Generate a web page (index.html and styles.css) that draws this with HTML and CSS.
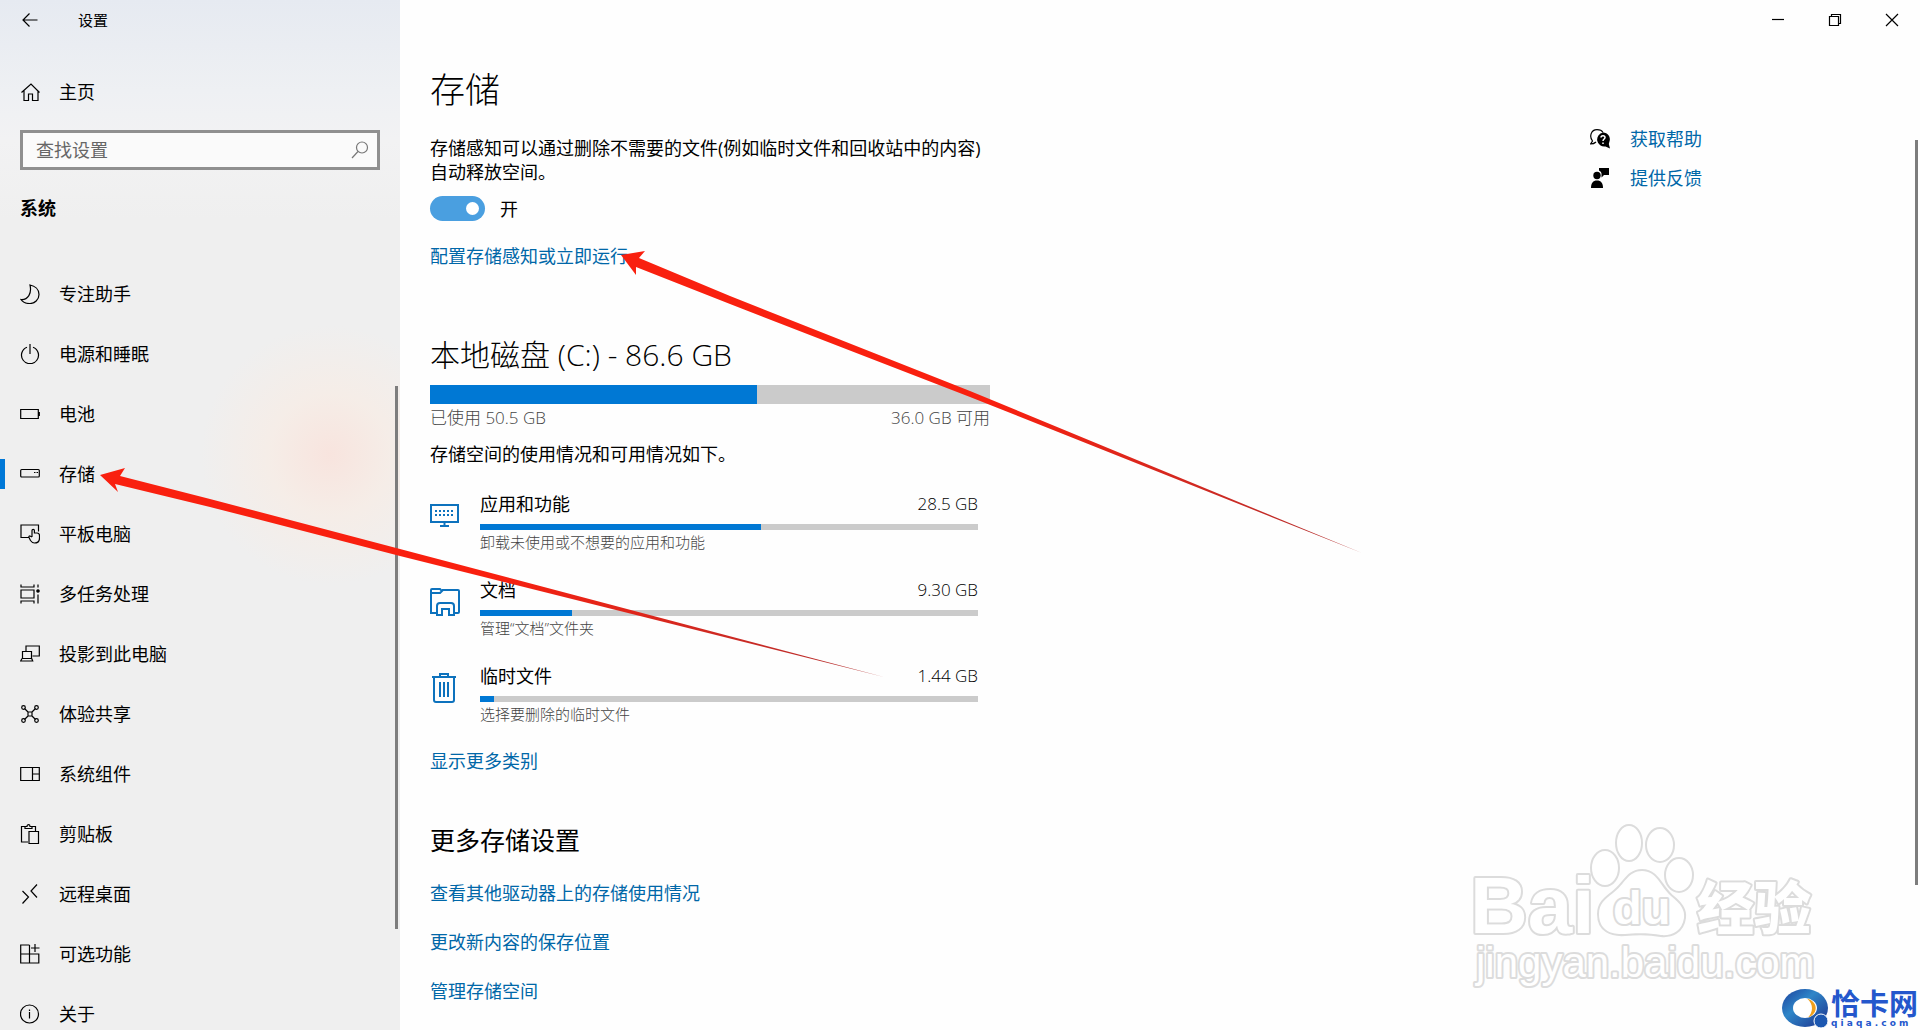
FILE: index.html
```
<!DOCTYPE html>
<html lang="zh-CN">
<head>
  <meta charset="UTF-8">
  <meta name="viewport" content="width=device-width, initial-scale=1.0">
  <title>设置</title>
  <link rel="stylesheet" href="styles.css">
</head>
<body>
  <aside class="sidebar">
    <header class="sidebar-top">
      <button class="back-btn" aria-label="返回">
        <svg class="icon" viewBox="0 0 20 20"><path d="M17.500 10H3M9.500 3.500 3 10l6.500 6.500"/></svg>
      </button>
      <span class="app-name">设置</span>
    </header>

    <a class="nav-item home" href="#">
      <svg class="icon" viewBox="0 0 20 20"><path d="M1.500 10.500 11 2l8.500 8.500M4 8.500v10h4.500v-6.500h4v6.500H18v-10"/></svg>
      主页
    </a>

    <div class="search">
      <input type="search" placeholder="查找设置" aria-label="查找设置">
      <svg class="icon search-icon" viewBox="0 0 20 20"><circle cx="12" cy="7.500" r="5.500"/><path d="M8 11.500 2 18"/></svg>
    </div>

    <h2 class="group-title">系统</h2>

    <nav class="nav">
      <a class="nav-item" href="#">
        <svg class="icon" viewBox="0 0 20 20"><path d="M10 1c5 1 9 4.500 9 9.500A9 9 0 0 1 9.500 19.500C6 19.500 2.500 18 1 15.500c7 .500 11-6 9-14.500z"/></svg>
        专注助手
      </a>
      <a class="nav-item" href="#">
        <svg class="icon" viewBox="0 0 20 20"><path d="M7 3.200a8.500 8.500 0 1 0 6 0M10 0v10"/></svg>
        电源和睡眠
      </a>
      <a class="nav-item" href="#">
        <svg class="icon" viewBox="0 0 20 20"><path d="M.700 5.500h17.600v9H.700zM19.300 8v4"/></svg>
        电池
      </a>
      <a class="nav-item active" href="#">
        <svg class="icon" viewBox="0 0 20 20"><rect x=".7" y="5.500" width="18.600" height="7.500" rx="1"/><path d="M14 8.500h1.500M16.500 8.500H18"/></svg>
        存储
      </a>
      <a class="nav-item" href="#">
        <svg class="icon" viewBox="0 0 20 20"><path d="M9 13.500H1V1h17.500v6.500M12 13V6.500a1.200 1.200 0 0 1 2.400 0V9h2.600c1.500 0 2.500 1 2.500 2.500v2.500c0 3-2 5-5 5-2 0-3-1-4-2.500L9 13.500c-.500-1 .500-2 1.500-1.300L12 13"/></svg>
        平板电脑
      </a>
      <a class="nav-item" href="#">
        <svg class="icon" viewBox="0 0 20 20"><path d="M1 .5v2.500h13V.5M1 6h13v8H1zM1 19.500V17h13v2.500M18 .5v3M18 10.500v9"/><circle cx="18" cy="7" r="1.200" fill="currentColor"/></svg>
        多任务处理
      </a>
      <a class="nav-item" href="#">
        <svg class="icon" viewBox="0 0 20 20"><path d="M6 7V2h13.300v10H12.500M2.500 7.500h9v7h-9zM2 14.500.700 17h12l-1-2.500"/></svg>
        投影到此电脑
      </a>
      <a class="nav-item" href="#">
        <svg class="icon" viewBox="0 0 20 20"><path d="M4.500 4.500l4 4M15.500 4.500l-4 4M4.500 15.500l4-4M15.500 15.500l-4-4M8 8h4v4H8z"/><circle cx="3.500" cy="3.500" r="1.800"/><circle cx="16.500" cy="3.500" r="1.800"/><circle cx="3.500" cy="16.500" r="1.800"/><circle cx="16.500" cy="16.500" r="1.800"/></svg>
        体验共享
      </a>
      <a class="nav-item" href="#">
        <svg class="icon" viewBox="0 0 20 20"><path d="M.700 3.500h18.600v13H.700zM12.500 3.500v13M12.500 10h7"/></svg>
        系统组件
      </a>
      <a class="nav-item" href="#">
        <svg class="icon" viewBox="0 0 20 20"><path d="M8 18H1.500V2.500H5M12 2.500h3.500V7M5 4.500V2.500h2c0-2.500 3-2.500 3 0h2v2zM9 7.500h9.500v12H9z"/></svg>
        剪贴板
      </a>
      <a class="nav-item" href="#">
        <svg class="icon" viewBox="0 0 20 20"><path d="M2.500 7l6 6-6 6.500M17 .5l-6 6.500 6 6.500"/></svg>
        远程桌面
      </a>
      <a class="nav-item" href="#">
        <svg class="icon" viewBox="0 0 20 20"><path d="M9.500 1H.700v18h18.100v-9H.700M9.500 1v18M15 0v8M11 4h8.500"/></svg>
        可选功能
      </a>
      <a class="nav-item" href="#">
        <svg class="icon" viewBox="0 0 20 20"><circle cx="9.500" cy="10" r="9"/><path d="M9.500 8v6.500M9.500 5.500V7"/></svg>
        关于
      </a>
    </nav>
    <div class="thumb side-thumb"></div>
  </aside>

  <main class="main">
    <header class="window-bar">
      <button class="win-btn" aria-label="最小化">
        <svg class="icon" viewBox="0 0 20 20"><path d="M4 9.500h12"/></svg>
      </button>
      <button class="win-btn" aria-label="还原">
        <svg class="icon" viewBox="0 0 20 20"><path d="M4.500 6.500h9v9h-9zM6.500 6.500v-2h9v9h-2"/></svg>
      </button>
      <button class="win-btn" aria-label="关闭">
        <svg class="icon" viewBox="0 0 20 20"><path d="M4 4l12 12M16 4 4 16"/></svg>
      </button>
    </header>

    <div class="columns">
      <div class="content">
        <h1>存储</h1>
        <p class="desc">存储感知可以通过删除不需要的文件(例如临时文件和回收站中的内容)自动释放空间。</p>
        <div class="switch">
          <input type="checkbox" id="sense" role="switch" checked>
          <label for="sense">开</label>
        </div>
        <a class="link" href="#">配置存储感知或立即运行</a>

        <h2 class="disk-title">本地磁盘 (C:) - 86.6 GB</h2>
        <div class="bar disk-bar"><div class="fill" style="width: 58.4%"></div></div>
        <div class="disk-info">
          <span>已使用 50.5 GB</span>
          <span>36.0 GB 可用</span>
        </div>
        <p class="note">存储空间的使用情况和可用情况如下。</p>

        <ul class="usage">
          <li class="usage-item">
            <svg class="usage-icon" viewBox="0 0 32 32"><path d="M1 5h27v17H1zM14.500 22v4M10 26h9"/><path class="dots" d="M5 11h18M5 15h18"/></svg>
            <div class="usage-body">
              <div class="usage-head"><span>应用和功能</span><span class="size">28.5 GB</span></div>
              <div class="bar"><div class="fill" style="width: 56.4%"></div></div>
              <div class="usage-sub">卸载未使用或不想要的应用和功能</div>
            </div>
          </li>
          <li class="usage-item">
            <svg class="usage-icon" viewBox="0 0 32 32"><path d="M6 27H1V4q0-1 1-1h8l2 2-2 2H1M12 4h16q1 0 1 1v21q0 1-1 1h-3M7 29v-9q0-3 3-3h11q3 0 3 3v9h-5v-6h-7v6z"/></svg>
            <div class="usage-body">
              <div class="usage-head"><span>文档</span><span class="size">9.30 GB</span></div>
              <div class="bar"><div class="fill" style="width: 18.5%"></div></div>
              <div class="usage-sub">管理“文档”文件夹</div>
            </div>
          </li>
          <li class="usage-item">
            <svg class="usage-icon" viewBox="0 0 32 32"><path d="M2 5h24M10 5V2h8v3M4 5v23c0 1.500.500 2 2 2h16c1.500 0 2-.500 2-2V5M10 10v15M14 10v15M18 10v15"/></svg>
            <div class="usage-body">
              <div class="usage-head"><span>临时文件</span><span class="size">1.44 GB</span></div>
              <div class="bar"><div class="fill" style="width: 2.8%"></div></div>
              <div class="usage-sub">选择要删除的临时文件</div>
            </div>
          </li>
        </ul>
        <a class="link" href="#">显示更多类别</a>

        <h2 class="more-title">更多存储设置</h2>
        <div class="more-links">
          <a class="link" href="#">查看其他驱动器上的存储使用情况</a>
          <a class="link" href="#">更改新内容的保存位置</a>
          <a class="link" href="#">管理存储空间</a>
        </div>
      </div>

      <div class="help">
        <a class="help-link" href="#">
          <svg class="help-icon" viewBox="0 0 20 20"><path d="M6 13C4.500 14.500 3 15 .500 15L2.500 12C-1 7.500 1 .7 7 .7c3 0 5 1 6 2.800" fill="none" stroke="currentColor" stroke-width="1.200"/><path d="M13 3.500a6.800 6.800 0 0 1 6.300 9.500l-.500 2 1.200 4.500-4.500-2A7 7 0 1 1 13 3.500z"/><path d="M11 8.500c0-2.500 4-2.500 4 0 0 1.500-2 1.500-2 3.500M13 13.500V15" fill="none" stroke="#fff" stroke-width="1.500"/></svg>
          获取帮助
        </a>
        <a class="help-link" href="#">
          <svg class="help-icon" viewBox="0 0 20 20"><circle cx="7" cy="7.500" r="3.700"/><path d="M1 20c0-5 2-7.500 6-7.500s6 2.500 6 7.500zM9 0h10v7h-5l-2.500 2.500V5.500C11 3.500 10 3 9 2.500z"/></svg>
          提供反馈
        </a>
      </div>
    </div>
    <div class="thumb main-thumb"></div>
  </main>

  <!-- red pointer arrows -->
  <svg class="arrows" viewBox="0 0 1920 1030" aria-hidden="true">
    <defs>
      <linearGradient id="a1" gradientUnits="userSpaceOnUse" x1="100" y1="475" x2="884" y2="676">
        <stop offset="0.500" stop-color="#f9200f"/><stop offset="1" stop-color="#b03030"/>
      </linearGradient>
      <linearGradient id="a2" gradientUnits="userSpaceOnUse" x1="621" y1="255" x2="1362" y2="553">
        <stop offset="0.500" stop-color="#f9200f"/><stop offset="1" stop-color="#b03030"/>
      </linearGradient>
    </defs>
    <path fill="url(#a1)" d="M100 475l25-7-5 8 90 23L400 549 884 677 400 556 210 507l-95-23 3 8z"/>
    <path fill="url(#a2)" d="M621 255l24-4-6 7 91 38L970 391 1362 553 970 397 730 304 636 267v8z"/>
  </svg>

  <svg class="watermark" viewBox="0 0 360 180" aria-hidden="true">
    <g class="outline">
      <text class="wm-bai" x="5" y="113">Bai</text>
      <ellipse cx="140" cy="48" rx="13" ry="17"/>
      <ellipse cx="164" cy="23" rx="12" ry="17"/>
      <ellipse cx="195" cy="25" rx="13" ry="16"/>
      <ellipse cx="214" cy="55" rx="13" ry="16"/>
      <path d="M177 51c15 0 18 15 29 25 10 8 14 14 13 22-2 14-13 18-23 17-10-2-26-2-36-1-14 1-26-4-26-20 0-10 6-15 14-21 12-9 15-22 29-22z"/>
      <text class="wm-du" x="148" y="104">du</text>
      <text class="wm-cn" x="232" y="109">经验</text>
      <text class="wm-url" x="11" y="157">jingyan.baidu.com</text>
    </g>
  </svg>

  <div class="site-logo">
    <svg class="logo-mark" viewBox="0 0 48 40" aria-hidden="true">
      <defs>
        <linearGradient id="ring" x1="0" y1="0" x2="1" y2="1">
          <stop offset="0" stop-color="#1c3f9c"/><stop offset="0.400" stop-color="#2f86c8"/><stop offset="1" stop-color="#1b2f8c"/>
        </linearGradient>
      </defs>
      <ellipse cx="24" cy="20" rx="23" ry="19" fill="url(#ring)"/>
      <ellipse cx="24" cy="20" rx="12" ry="10" fill="#fff"/>
      <path d="M26 10.500c11 3 12 15 1 19 5-5 6-13-1-19z" fill="#f0a01c"/>
      <circle cx="40" cy="33" r="7" fill="#1c57b0" stroke="#fff"/>
    </svg>
    <div class="logo-text">
      <span class="logo-name">恰卡网</span>
      <span class="logo-url">q i a q a . c o m</span>
    </div>
  </div>
</body>
</html>
```
FILE: styles.css
```
* {
  box-sizing: border-box;
}

body {
  margin: 0;
  position: relative;
  display: flex;
  height: 100vh;
  overflow: hidden;
  background: #fefefe;
  color: #000;
  font-family: "Open Sans", "Noto Sans CJK SC", sans-serif;
  font-size: 18px;
  line-height: 24px;
}

h1, h2, p, ul {
  margin: 0;
  padding: 0;
}

a {
  color: inherit;
  text-decoration: none;
}

button {
  border: none;
  padding: 0;
  background: none;
  color: inherit;
  cursor: pointer;
}

.icon {
  width: 20px;
  height: 20px;
  flex: none;
  fill: none;
  stroke: currentColor;
  stroke-width: 1.2;
}

/* sidebar */
.sidebar {
  position: relative;
  flex: 0 0 400px;
  background:
    radial-gradient(circle at 330px 455px, #f8e4de 0, rgba(248, 236, 228, 0.7) 60px, rgba(240, 240, 239, 0) 130px),
    linear-gradient(#e6eaf1 0, #eef0f3 90px, #f2f2f3 140px, #efefef 220px);
}

.sidebar-top {
  display: flex;
  align-items: center;
  height: 40px;
  padding-left: 20px;
  gap: 38px;
  font-size: 15px;
}

.back-btn {
  display: flex;
}

.nav-item {
  display: flex;
  align-items: center;
  height: 60px;
  padding-left: 20px;
  gap: 19px;
}

.home {
  height: 64px;
  margin-top: 20px;
}

.search {
  position: relative;
  margin: 6px 20px 0;
}

.search input {
  display: block;
  width: 100%;
  height: 40px;
  padding: 0 40px 0 13px;
  border: 3px solid #8f8f8f;
  border-radius: 0;
  outline: none;
  background: #fafafa;
  font: inherit;
}

.search input::placeholder {
  color: #666;
  opacity: 1;
}

.search-icon {
  position: absolute;
  top: 10px;
  right: 10px;
  color: #777;
}

.group-title {
  padding: 20px 20px 38px;
  font-size: 18px;
  line-height: 36px;
  font-weight: 700;
}

.active {
  position: relative;
}

.active::before {
  content: "";
  position: absolute;
  left: 0;
  width: 5px;
  height: 30px;
  background: #0078d7;
}

.thumb {
  position: absolute;
  width: 3px;
  background: #7d7d7d;
}

.side-thumb {
  right: 2px;
  top: 37.5%;
  bottom: 9.8%;
}

.main-thumb {
  right: 2px;
  top: 13.6%;
  bottom: 14.1%;
}

/* main area */
.main {
  position: relative;
  flex: 1;
}

.window-bar {
  display: flex;
  justify-content: flex-end;
  height: 40px;
}

.win-btn {
  display: flex;
  align-items: center;
  justify-content: center;
  width: 57px;
}

.columns {
  display: flex;
  justify-content: space-between;
  padding: 20px 0 0 30px;
}

.content {
  width: 560px;
}

h1 {
  font-size: 35px;
  font-weight: 300;
  line-height: 60px;
}

.desc {
  margin-top: 16px;
}

.switch {
  display: flex;
  align-items: center;
  gap: 15px;
  margin: 12px 0 23px;
}

.switch input {
  appearance: none;
  display: flex;
  align-items: center;
  justify-content: flex-end;
  width: 55px;
  height: 25px;
  margin: 0;
  padding-right: 6px;
  border-radius: 13px;
  background: #4a9fe0;
}

.switch input::before {
  content: "";
  width: 13px;
  height: 13px;
  border-radius: 50%;
  background: #fff;
}

.link,
.help-link {
  color: #0067a8;
}

.link {
  display: block;
}

.disk-title {
  margin: 67px 0 10px;
  font-size: 30px;
  font-weight: 300;
  line-height: 40px;
}

.bar {
  height: 6px;
  background: #cbcbcb;
}

.disk-bar {
  height: 19px;
}

.fill {
  height: 100%;
  background: #0078d4;
}

.disk-info,
.usage-head {
  display: flex;
  justify-content: space-between;
}

.disk-info {
  margin-top: 2px;
  font-size: 17px;
  font-weight: 300;
  color: #444;
}

.note {
  margin-top: 12px;
}

.usage {
  display: flex;
  flex-direction: column;
  gap: 24px;
  margin: 26px 12px 23px 0;
  list-style: none;
}

.usage-item {
  display: flex;
  gap: 18px;
}

.usage-icon {
  width: 32px;
  height: 32px;
  flex: none;
  margin-top: 8px;
  fill: none;
  stroke: #0d72bd;
  stroke-width: 2;
}

.dots {
  stroke-dasharray: 2 2;
}

.usage-body {
  flex: 1;
}

.usage-head {
  margin-bottom: 8px;
}

.size {
  font-size: 17px;
  font-weight: 300;
}

.usage-sub {
  font-size: 15px;
  font-weight: 300;
  color: #444;
}

.more-title {
  margin: 49px 0 23px;
  font-size: 25px;
  font-weight: 400;
  line-height: 36px;
}

.more-links {
  display: flex;
  flex-direction: column;
  gap: 25px;
}

.help {
  display: flex;
  flex-direction: column;
  gap: 15px;
  width: 330px;
  margin-top: 67px;
}

.help-link {
  display: flex;
  align-items: center;
  gap: 20px;
}

.help-icon {
  width: 20px;
  height: 20px;
  color: #000;
  fill: currentColor;
}

/* overlays */
.arrows {
  position: absolute;
  left: 0;
  top: 0;
  width: 100%;
  pointer-events: none;
}

.watermark {
  position: absolute;
  right: 95px;
  bottom: 30px;
  width: 360px;
}

.outline {
  fill: #fff;
  stroke: #dcdcdc;
  stroke-width: 4;
  stroke-linejoin: round;
  paint-order: stroke;
}

.wm-bai {
  font: 700 80px "Liberation Sans", sans-serif;
}

.wm-du {
  font: 700 47px "Liberation Sans", sans-serif;
}

.wm-cn {
  font: 900 57px "Noto Sans CJK SC", sans-serif;
}

.wm-url {
  font: 400 42px "Liberation Sans", sans-serif;
}

.site-logo {
  position: absolute;
  right: 2px;
  bottom: 2px;
  display: flex;
  align-items: center;
  gap: 2px;
}

.logo-mark {
  width: 48px;
  height: 40px;
}

.logo-text {
  display: flex;
  flex-direction: column;
  color: #2457cc;
  font-weight: 700;
}

.logo-name {
  font-size: 29px;
  line-height: 30px;
}

.logo-url {
  font-family: "DejaVu Sans", sans-serif;
  font-size: 9px;
  line-height: 9px;
}
```
